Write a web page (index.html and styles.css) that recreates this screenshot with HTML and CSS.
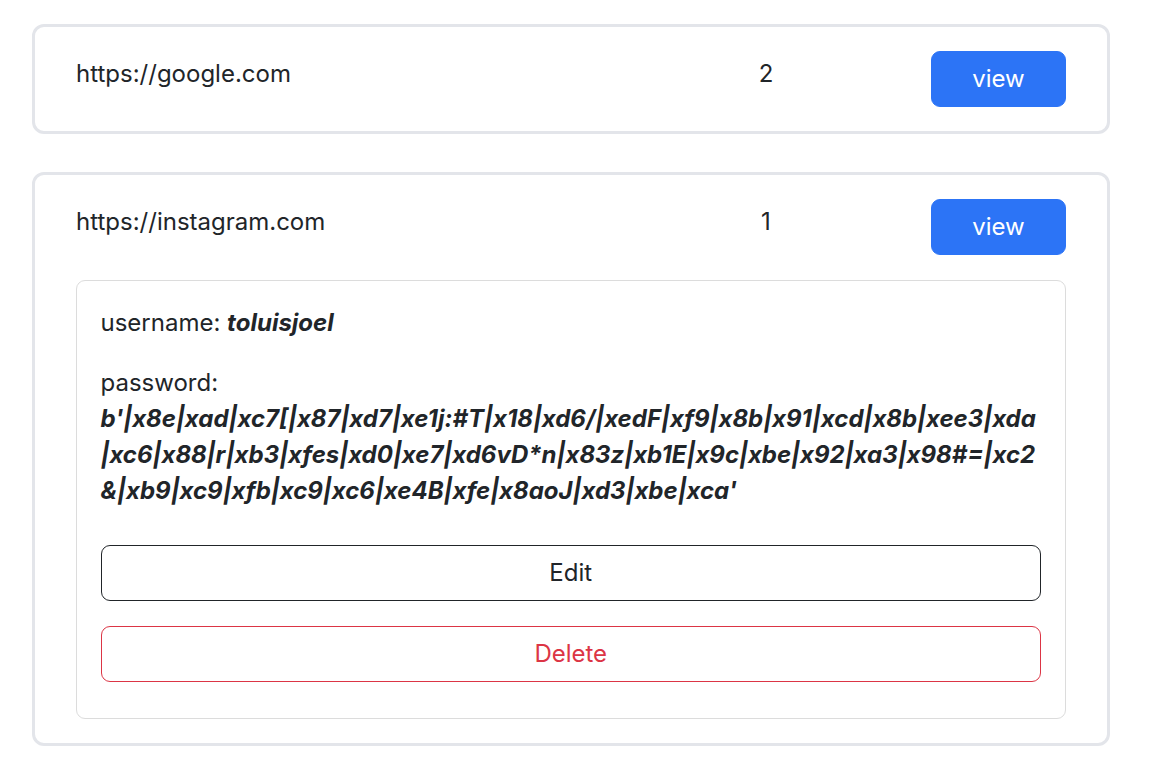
FILE: index.html
```html
<!DOCTYPE html>
<html lang="en">
<head>
<meta charset="utf-8">
<title>Passwords</title>
<link rel="stylesheet" href="styles.css">
</head>
<body>
<div class="page">
  <div class="site-card">
    <div class="site-row">
      <div class="site-url">https://google.com</div>
      <div class="site-count">2</div>
      <button class="btn btn-primary">view</button>
    </div>
  </div>

  <div class="site-card">
    <div class="site-row">
      <div class="site-url">https://instagram.com</div>
      <div class="site-count">1</div>
      <button class="btn btn-primary">view</button>
    </div>
    <div class="detail-card">
      <p class="field">username: <b><i>toluisjoel</i></b></p>
      <p class="field">password:<br><b class="secret"><i>b'|x8e|xad|xc7[|x87|xd7|xe1j:#T|x18|xd6/|xedF|xf9|x8b|x91|xcd|x8b|xee3|xda|xc6|x88|r|xb3|xfes|xd0|xe7|xd6vD*n|x83z|xb1E|x9c|xbe|x92|xa3|x98#=|xc2&amp;|xb9|xc9|xfb|xc9|xc6|xe4B|xfe|x8aoJ|xd3|xbe|xca'</i></b></p>
      <div class="actions">
        <button class="btn btn-outline-dark">Edit</button>
        <button class="btn btn-outline-danger">Delete</button>
      </div>
    </div>
  </div>
</div>
</body>
</html>
```

FILE: styles.css
```css
html, body {
  margin: 0;
  padding: 0;
  background: #ffffff;
}

body {
  font-family: Inter, "Liberation Sans", sans-serif;
  font-size: 24px;
  line-height: 1.5;
  color: #212529;
}

.page {
  padding: 24px 40px 20px 32px;
  display: flex;
  flex-direction: column;
  gap: 38px;
}

.site-card {
  border: 3px solid #e3e5ea;
  border-radius: 12px;
  padding: 24px 41px 24px 41px;
  display: flex;
  flex-direction: column;
  gap: 25px;
}

.site-row {
  display: grid;
  grid-template-columns: 1fr 330px 135px;
  align-items: start;
}

.site-url,
.site-count {
  margin-top: 5px;
  line-height: 36px;
}

.site-count {
  text-align: center;
}

.btn {
  font-family: inherit;
  font-size: 24px;
  line-height: 36px;
  height: 56px;
  border-radius: 9px;
  cursor: pointer;
  background: #ffffff;
  padding: 0 18px;
}

.btn-primary {
  background: #2c74f6;
  border: 1.5px solid #2c74f6;
  color: #ffffff;
}

.btn-outline-dark {
  border: 1.5px solid #212529;
  color: #212529;
}

.btn-outline-danger {
  border: 1.5px solid #dc3545;
  color: #dc3545;
}

.detail-card {
  border: 1.5px solid #dcdcdc;
  border-radius: 9px;
  padding: 24px 24px 36px 23.5px;
}

.field {
  margin: 0 0 24px 0;
}

.field + .field {
  margin-bottom: 0;
}

.secret {
  word-break: break-all;
}

.actions {
  margin-top: 36px;
  display: flex;
  flex-direction: column;
  gap: 25px;
}
```
